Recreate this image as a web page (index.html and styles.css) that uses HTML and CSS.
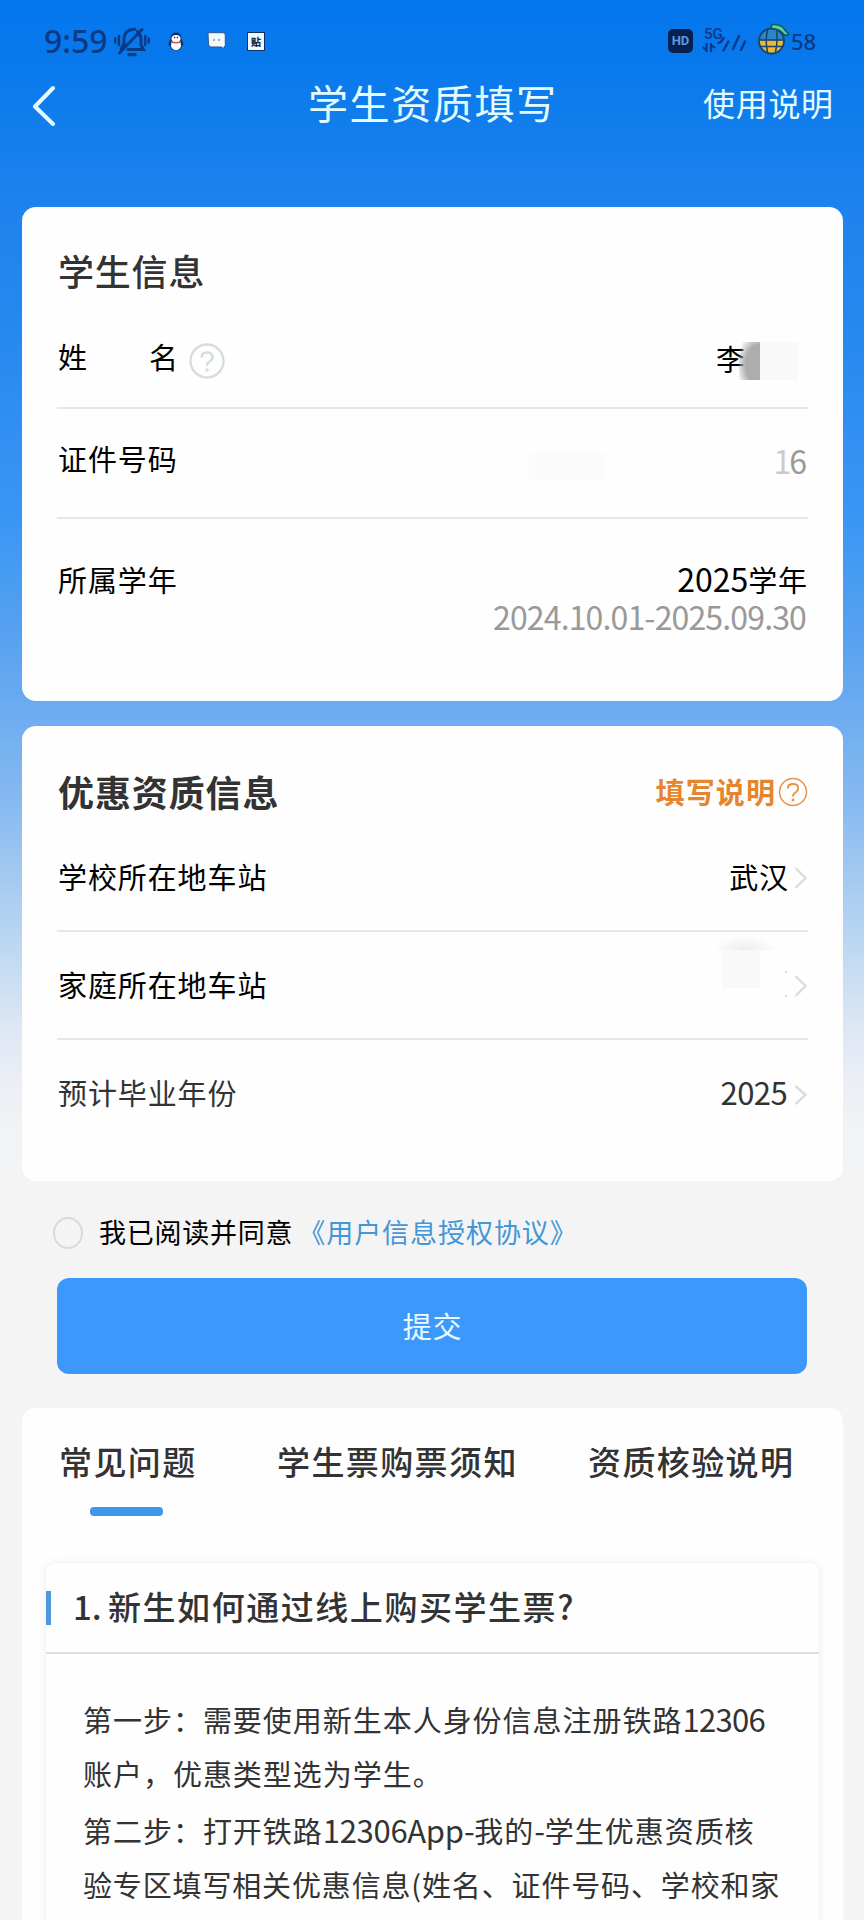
FILE: index.html
```html
<!DOCTYPE html>
<html lang="zh-CN">
<head>
<meta charset="utf-8">
<title>学生资质填写</title>
<link rel="stylesheet" href="styles.css">
</head>
<body>
<div class="page">
  <div class="status">
    <span class="clock">9:59</span>
    <svg class="ic-mute" viewBox="0 0 36 30" width="36" height="30" fill="none" stroke="#0b3a85" stroke-width="3" stroke-linecap="round">
      <path d="M14 22.500H29.500L27 18V11.500Q26.500 7 23.500 4.500M21 2.300Q11 2 10 11V17L7 21.500M5.500 26L28 2.500"/><path d="M15 27.600H21" stroke-width="3.400"/>
      <path d="M1.300 11.500V15.500M5 9V18M34.700 11.500V15.500M31.300 9V18" stroke-width="2.400"/>
    </svg>
    <svg class="ic-qq" viewBox="0 0 16 19" width="16" height="19">
      <path d="M8 .5Q13.500.5 13.500 7Q16 11 15 14L13.500 13.500Q14 18.500 8 18.500T2.500 13.500L1 14Q0 11 2.500 7Q2.500.5 8 .5Z" fill="#12305f"/>
      <ellipse cx="8" cy="13.200" rx="5" ry="5" fill="#fff"/><ellipse cx="8" cy="6.500" rx="4.500" ry="3.500" fill="#fff"/>
      <path d="M3 9.500Q8 12 13 9.500" stroke="#c25a6a" stroke-width="1.400" fill="none"/><circle cx="6.500" cy="5.500" r=".8" fill="#123"/><circle cx="9.500" cy="5.500" r=".8" fill="#123"/>
    </svg>
    <svg class="ic-msg" viewBox="0 0 19 18" width="19" height="18">
      <path d="M1 .7H16Q18.300.7 18.300 3V14.500H17V17L14.500 15H4Q1.500 15 1.500 12Z" fill="#f1fbff" stroke="#31578f" stroke-width="1"/>
      <circle cx="7" cy="8" r=".8" fill="#345"/><circle cx="12" cy="8" r=".8" fill="#345"/>
    </svg>
    <span class="ic-tie">贴</span>
    <span class="grow"></span>
    <span class="hd">HD</span>
    <svg class="ic-net" viewBox="0 0 44 30" width="44" height="30" fill="none" stroke="#0b3a85">
      <text x="2" y="14" class="net-text">5G</text>
      <path d="M16.500 18L19 17L21.500 13M21.500 25.500L26.500 16.500M31 24L37 11M39 25L43 16.500" stroke-width="2.400" stroke-linecap="round"/>
      <path d="M4.500 18V27M5 25.500L.5 22M9 27V18M8.500 19.500L13 23" stroke-width="2.200"/>
    </svg>
    <svg class="ic-batt" viewBox="0 0 33 32" width="33" height="32" fill="none">
      <circle cx="14.500" cy="18" r="12.500" fill="#2f83c8"/>
      <path d="M2 17.500H27A12.500 12.500 0 0 1 2 17.500Z" fill="#f2b72c"/>
      <path d="M2.500 17H26.500M3.500 23.500H25.500M10.500 7Q8 18 10.500 29M19.500 8Q21 18 18.500 29" stroke="#17446b" stroke-width="1.500"/>
      <circle cx="14.500" cy="18" r="12.500" stroke="#17446b" stroke-width="1.800"/>
      <path d="M14.500 5.500V1.500Q25 1 27.500 6.500L32 11.500Q28 14 24.500 9Q20.500 5.500 14.500 5.500Z" fill="#5cd0a8" stroke="#0d5a5a" stroke-width="1.600"/>
    </svg>
    <span class="level">58</span>
  </div>
  <div class="nav">
    <svg class="back" viewBox="0 0 24 42" width="24" height="42"><path d="M21 4L3 22.500L21 40" fill="none" stroke="#e2fbff" stroke-width="4" stroke-linecap="round" stroke-linejoin="round"/></svg>
    <h1 class="nav-title">学生资质填写</h1>
    <span class="nav-link">使用说明</span>
  </div>

  <section class="card info">
    <h2 class="info-title">学生信息</h2>
    <div class="row r-name">
      <span class="label name-label"><span>姓</span><span>名</span></span>
      <svg class="help" viewBox="0 0 36 36" width="36" height="36" fill="none" stroke="#d5dddf"><circle cx="18" cy="18" r="16.500" stroke-width="2.400"/><path d="M12.500 14.500Q12.500 9.500 18 9.500T23.500 14Q23.500 16.500 20.500 18.500T18 23" stroke-width="2.400"/><circle cx="18" cy="27" r="1" stroke-width="1.600"/></svg>
      <span class="grow"></span>
      <span class="name-value">李</span><span class="mask-dark"></span><span class="mask-light"></span>
    </div>
    <div class="row r-id">
      <span class="label">证件号码</span>
      <span class="grow"></span>
      <span class="mask-id"></span>
      <span class="id-value"><span class="faded">1</span>6</span>
    </div>
    <div class="row r-year">
      <span class="label">所属学年</span>
      <span class="grow"></span>
      <div class="year"><div class="year-main"><span class="year-num">2025</span>学年</div><div class="year-range">2024.10.01-2025.09.30</div></div>
    </div>
  </section>

  <section class="card quali">
    <div class="quali-head"><h2 class="quali-title">优惠资质信息</h2>
      <span class="guide">填写说明</span>
      <svg viewBox="0 0 30 30" width="30" height="30" fill="none" stroke="#e5944a"><circle cx="15" cy="15" r="13.500" stroke-width="1.500"/><path d="M9.800 11.500Q9.800 7 15 7T20.200 11.300Q20.200 13.800 17.500 15.500T15 19.500" stroke-width="1.900"/><circle cx="15" cy="23" r=".7" stroke-width="1.500"/></svg>
    </div>
    <div class="row r-station"><span class="label">学校所在地车站</span><span class="grow"></span><span class="value">武汉</span><svg class="chev" viewBox="0 0 13 22" width="13" height="22"><path d="M1.500 1L11.500 11L1.500 21"/></svg></div>
    <div class="row r-station"><span class="label">家庭所在地车站</span><span class="grow"></span><span class="mask-home"></span><span class="specks"></span><svg class="chev" viewBox="0 0 13 22" width="13" height="22"><path d="M1.500 1L11.500 11L1.500 21"/></svg></div>
    <div class="row r-grad"><span class="label">预计毕业年份</span><span class="grow"></span><span class="value grad-value">2025</span><svg class="chev" viewBox="0 0 13 22" width="13" height="22"><path d="M1.500 2L11.500 11L1.500 20"/></svg></div>
  </section>

  <div class="agree"><span class="radio"></span><span class="agree-text">我已阅读并同意</span><span class="agree-link">《用户信息授权协议》</span></div>
  <div class="submit">提交</div>

  <section class="card faq">
    <div class="tabs"><span class="tab active">常见问题</span><span class="tab">学生票购票须知</span><span class="tab">资质核验说明</span></div>
    <div class="qa">
      <div class="q"><span class="q-bar"></span><span class="q-num">1.</span><span class="q-text">新生如何通过线上购买学生票?</span></div>
      <div class="a">
        <p>第一步：需要使用新生本人身份信息注册铁路<span class="lat">12306</span></p>
        <p>账户，优惠类型选为学生。</p>
        <p>第二步：打开铁路<span class="lat app">12306App-</span>我的<span class="lat app">-</span>学生优惠资质核</p>
        <p class="tight">验专区填写相关优惠信息(姓名、证件号码、学校和家</p>
      </div>
    </div>
  </section>
</div>
</body>
</html>
```

FILE: styles.css
```css
* { box-sizing: border-box; margin: 0; padding: 0; }
body {
  width: 864px; height: 1920px; overflow: hidden; background: #f4f4f4;
  font-family: "Noto Sans CJK SC", sans-serif; color: #000;
}
.page {
  width: 864px; height: 1920px; overflow: hidden;
  background: linear-gradient(180deg, #0577ee 0, #0879ec 60px, #1d82ee 200px, #2588ee 320px, #3a96f4 520px, #58a2f0 640px, #6cacf1 710px, #86b9f0 800px, #a8ccf1 890px, #c6dcf3 970px, #dfe7f4 1030px, #ebeef4 1080px, #f1f3f4 1130px, #f4f4f4 1200px);
}
.grow { flex: 1; }
.status { display: flex; align-items: center; height: 82px; padding: 0 46px 0 44px; color: #0b3a85; }
.clock { width: 70px; font-size: 32px; font-weight: 500; letter-spacing: 0; line-height: 40px; font-family: "Noto Sans", sans-serif; white-space: nowrap; }
.ic-mute { margin: 2px 0 0 0; }
.ic-qq { margin-left: 18px; }
.ic-msg { margin-left: 23px; }
.ic-tie { margin-left: 21px; width: 18px; height: 19px; background: #eefaff; border: 1px solid #12305f; color: #12243f; font-size: 10px; line-height: 17px; font-weight: 900; text-align: center; }
.hd { width: 25px; height: 24px; border-radius: 5px; background: #06214f; color: #5b9be0; font: 700 13px/24px Roboto, sans-serif; text-align: center; }
.ic-net { margin-left: 9px; margin-top: -2px; }
.net-text { font: 500 15px Roboto, sans-serif; fill: #0b3a85; stroke: none; }
.ic-batt { margin-left: 11px; margin-top: -4px; }
.level { font: 500 22px/30px "Noto Sans", sans-serif; margin-left: 1px; width: 27px; color: #0b3a85; }

.nav { display: flex; align-items: center; height: 125px; padding: 0 29px 80px 32px; color: #e4fcff; }
.nav-title { font-size: 40px; font-weight: 400; letter-spacing: 1.6px; line-height: 60px; margin: -6px 0 0 252px; width: 252px; white-space: nowrap; }
.nav-link { font-size: 32px; letter-spacing: .7px; line-height: 45px; margin: -4px 0 0 143px; white-space: nowrap; }

.card { margin: 0 21px 0 22px; border-radius: 14px; background: #fefefe; }
.info { height: 494px; padding: 40px 35px 0; }
.info-title { font-size: 36px; font-weight: 500; letter-spacing: .8px; line-height: 46px; color: #333; margin-left: 1px; }
.row { display: flex; align-items: center; border-bottom: 2px solid #e7e7e7; font-size: 29px; letter-spacing: .9px; line-height: 40px; }
.label { margin-left: 1px; }
.info .row:last-child, .quali .row:last-child { border: 0; }
.r-name { height: 116px; padding-top: 12px; }
.name-label { display: flex; justify-content: space-between; width: 121px; }
.help { margin: 10px 0 0 10px; }
.name-value { margin-top: 4px; }
.mask-dark { width: 21px; height: 38px; margin: 9px 0 0 -7px; background: radial-gradient(ellipse 24px 34px at 100% 60%, #adadad 0 60%, rgba(180,180,180,0) 100%); }
.mask-light { width: 38px; height: 38px; background: #f9f9f9; margin: 9px 10px 0 0; }
.r-id { height: 110px; padding-bottom: 10px; }
.mask-id { width: 76px; height: 28px; background: #fbfbfb; margin: 18px 168px 0 0; }
.id-value { color: #999; font-size: 32px; letter-spacing: -2px; padding: 3px 3px 0 0; }
.faded { opacity: .5; letter-spacing: -2px; }
.r-year { align-items: flex-start; padding-top: 40px; }
.year { text-align: right; }
.year-main { line-height: 38px; height: 38px; }
.year-num { font-size: 32px; letter-spacing: 0; }
.year-range { font-size: 32px; line-height: 38px; letter-spacing: -.85px; color: #999; padding-right: 2px; }

.quali { height: 455px; padding: 40px 35px 0; margin-top: 25px; }
.quali-head { display: flex; align-items: center; height: 49px; }
.quali-title { flex: 1; font-size: 36px; font-weight: 700; letter-spacing: .9px; color: #333; margin-left: 1px; }
.guide { font-size: 29px; font-weight: 700; letter-spacing: 1.1px; color: #e5862f; margin-right: 2px; }
.quali-head svg { margin-top: 3px; }
.r-station { height: 108px; padding-bottom: 2px; }
.quali-head + .r-station { height: 117px; padding-top: 7px; padding-bottom: 0; }
.value { margin-right: 5px; }
.chev { margin: 3px 1px 0 0; fill: none; stroke: #dcdcdc; stroke-width: 2.400; }
.mask-home { width: 60px; height: 52px; margin: 0 10px 44px 0; background: radial-gradient(ellipse 30px 14px at 50% 14px, #ececec, #fdfdfd) 0 0 / 60px 14px no-repeat, linear-gradient(#f9f9f9, #f9f9f9) 7px 14px / 38px 38px no-repeat; }
.specks { width: 2px; height: 26px; border-top: 2px solid #ddd; border-bottom: 2px solid #ddd; margin-right: 7px; }
.r-grad { height: 105px; color: #333; padding-bottom: 1px; }
.r-grad .chev { margin-top: 5px; }
.grad-value { font-size: 31px; letter-spacing: -.6px; margin-right: 7px; }

.agree { display: flex; align-items: center; height: 50px; margin-top: 25px; padding-left: 53px; font-size: 27px; letter-spacing: .75px; white-space: nowrap; }
.radio { width: 30px; height: 32px; border: 2px solid #d9d9d9; border-radius: 50%; margin: 4px 16px 0 0; }
.agree-link { color: #4396d8; margin-left: 5px; letter-spacing: .95px; }
.submit { height: 96px; margin: 22px 57px 0; border-radius: 12px; background: #3c99fb; color: #e9fbff; font-size: 29px; letter-spacing: .8px; line-height: 94px; text-align: center; padding-left: 1px; }

.faq { height: 540px; margin-top: 34px; padding: 28px 24px 0; border-radius: 14px 14px 0 0; }
.tabs { display: flex; padding-left: 13px; height: 127px; font-size: 33px; font-weight: 500; letter-spacing: 1.400px; line-height: 50px; color: #333; white-space: nowrap; }
.tab { flex: none; width: 311px; }
.tab:last-child { width: auto; }
.tab.active { width: 218px; }
.active::after { content: ""; display: block; width: 73px; height: 9px; border-radius: 4px; background: #3f97ec; margin: 21px 0 0 31px; }
.qa { height: 420px; border-radius: 10px; box-shadow: 0 0 9px rgba(0,0,0,.08); }
.q { display: flex; align-items: center; height: 91px; border-bottom: 2px solid #dedede; font-size: 33px; font-weight: 500; letter-spacing: 1.550px; color: #333; white-space: nowrap; }
.q-bar { width: 5px; height: 34px; background: #5098de; }
.q-num { width: 35px; margin-left: 22px; letter-spacing: 0; }
.q-num, .q-text { margin-top: -4px; }
.a { padding: 37px 0 0 37px; font-size: 29px; letter-spacing: .97px; line-height: 55px; color: #333; white-space: nowrap; }
.a p { height: 55.300px; }
.a .tight { letter-spacing: .85px; }
.lat { font-size: 31px; letter-spacing: -.7px; }
.app { letter-spacing: -.3px; }
```
